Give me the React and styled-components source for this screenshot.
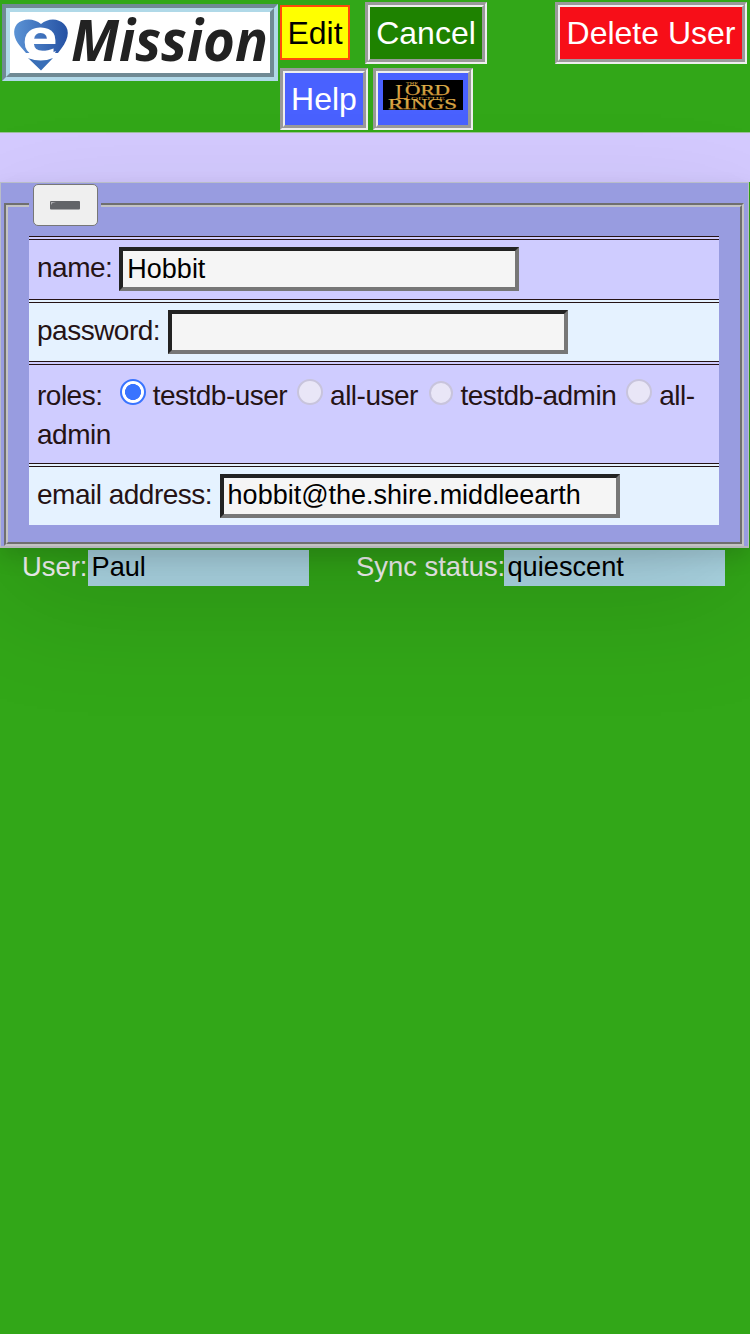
import React from "react";
import styled, { createGlobalStyle } from "styled-components";

const GlobalStyle = createGlobalStyle`
  * { box-sizing: border-box; }
  body { margin: 0; background: #32a718; font-family: "Liberation Sans", Arial, sans-serif; }
`;

const Page = styled.main`
  width: 750px;
  height: 1334px;
  overflow: hidden;
  background: #32a718;
`;

const Header = styled.header`
  display: flex;
  align-items: flex-start;
  height: 132px;
  padding: 2px 3px 0 2px;
`;

const LogoFrame = styled.div`
  width: 276px;
  height: 77px;
  margin: 2px 2px 0 0;
  border: 8px groove #b0d9e8;
  background: #fff;
  svg { display: block; width: 260px; height: 61px; overflow: visible; }
`;

const Actions = styled.div`
  flex: 1;
`;

const ActionRow = styled.div`
  display: flex;
  align-items: flex-start;
  height: 66px;
  gap: ${(p) => p.$gap}px;
`;

const Button = styled.button`
  width: ${(p) => p.$width}px;
  height: 62px;
  padding: 0;
  border: 5px groove #eee;
  background: ${(p) => p.$bg};
  color: #fff;
  font: 32px/50px "Liberation Sans", Arial, sans-serif;
  white-space: nowrap;
  margin-left: ${(p) => (p.$end ? "auto" : 0)};
  svg { display: block; width: 80px; height: 30px; margin: -9px auto 0; overflow: visible; }
`;

const EditButton = styled(Button)`
  height: 55px;
  margin-top: 3px;
  border: 2px solid #ff4a0a;
  color: #000;
`;

const Band = styled.div`
  height: 50px;
  border-top: 1px solid #9bbf9b;
  background: #d4caff;
`;

const Panel = styled.section`
  position: relative;
  width: 749px;
  height: 366px;
  padding: 1px 4px 0 3px;
  border: 1px solid #b9bdc8;
  border-bottom: 2px solid #b5b5b9;
  background: #989ce0;
  box-shadow: 0 50px 120px rgba(0, 0, 0, 0.14), 0 9px 20px rgba(0, 0, 0, 0.12);
`;

const Fieldset = styled.fieldset`
  min-width: 0;
  height: 362px;
  margin: 0;
  padding: 10px 21px 0;
  border: 4px groove #c3c3c3;
`;

const Legend = styled.legend`
  margin: 0;
  padding: 0 3px 0 4px;
  height: 42px;
`;

const ToggleButton = styled.button`
  display: flex;
  align-items: center;
  justify-content: center;
  width: 65px;
  height: 42px;
  padding: 0 1px 0 0;
  border: 1.5px solid #777;
  border-radius: 5px;
  background: #efefef;
`;

const Row = styled.div`
  height: ${(p) => p.$height}px;
  padding: ${(p) => (p.$multi ? "11px" : "7px")} 8px 0;
  border-top: 4px double #251315;
  background: ${(p) => (p.$tint ? "#e5f2ff" : "#cfccff")};
  color: #251315;
  font-size: 28px;
  letter-spacing: -0.5px;
  line-height: ${(p) => (p.$multi ? 39 : 42)}px;
`;

const FieldLine = styled.label`
  display: flex;
  gap: ${(p) => p.$gap || 7}px;
  white-space: nowrap;
`;

const Input = styled.input`
  width: 400px;
  height: 44px;
  padding: 0 4px;
  border: 4px inset #777;
  border-radius: 0;
  outline: 0;
  background: #f5f5f5;
  color: #000;
  font: 27px "Liberation Sans", Arial, sans-serif;
`;

const Radio = styled.span`
  display: inline-block;
  width: ${(p) => p.$size || 26}px;
  height: ${(p) => p.$size || 26}px;
  margin: 0 ${(p) => p.$right || 6.7}px 0 ${(p) => p.$left || 10.2}px;
  border: 2px solid ${(p) => (p.$checked ? "#3974ff" : "#c8c4dc")};
  border-radius: 50%;
  background: ${(p) => (p.$checked ? "radial-gradient(circle, #3974ff 0 7.7px, #fff 8.3px)" : "#e9e6f7")};
`;

const StatusBar = styled.footer`
  display: flex;
  align-items: flex-start;
  padding: 2px 0 0 22px;
  color: #f6f6f6;
  font-size: 27.4px;
  line-height: 34px;
`;

const StatusItem = styled.div`
  display: flex;
  flex: none;
  margin-right: 47px;
`;

const StatusLabel = styled.span`
  width: ${(p) => p.$width}px;
  white-space: nowrap;
`;

const StatusValue = styled.span`
  width: 221px;
  height: 36px;
  padding-left: 3.5px;
  background: #add8e6;
  color: #000;
  font-size: 27.2px;
`;

const Logo = () => (
  <svg viewBox="0 0 260 61" aria-label="eMission">
    <defs>
      <linearGradient id="heart" x1="0" x2="1">
        <stop offset="0" stopColor="#5b93d5" />
        <stop offset="1" stopColor="#2551a3" />
      </linearGradient>
    </defs>
    <path d="M31 12C24 6 13 6 7 12C2 18 4 27 10 34L16 41L48 41C58 29 61 19 54 12C48 6 38 6 31 12Z" fill="url(#heart)" />
    <path d="M18 46Q31 51 43 46L31 58.5Z" fill="#386eb7" />
    <text x="12" y="43.5" fontFamily="Open Sans" fontSize="52" fontWeight="700" fill="#fff" textLength="36" lengthAdjust="spacingAndGlyphs">e</text>
    <path d="M16 41Q29 47 46 39L43 45Q31 49 18 46Z" fill="#fff" />
    <text x="61" y="49" fontFamily="Open Sans" fontSize="57.5" fontWeight="700" fontStyle="italic" fill="#222" textLength="197" lengthAdjust="spacingAndGlyphs">Mission</text>
  </svg>
);

const RingsLogo = () => (
  <svg viewBox="0 0 80 30" aria-label="The Lord of the Rings">
    <defs>
      <linearGradient id="gold" x2="0" y2="1">
        <stop stopColor="#e6bd54" />
        <stop offset="1" stopColor="#c8882e" />
      </linearGradient>
    </defs>
    <rect width="80" height="30" fill="#000" />
    <g fill="url(#gold)" fontFamily="Liberation Serif">
      <text x="23" y="6" fontSize="5.5" textLength="12" lengthAdjust="spacingAndGlyphs">THE</text>
      <text x="12" y="18.5" fontSize="20" textLength="14" lengthAdjust="spacingAndGlyphs">L</text>
      <text x="22" y="15" fontSize="14" textLength="45" lengthAdjust="spacingAndGlyphs" stroke="#dca747" strokeWidth=".25">ORD</text>
      <text x="28" y="19.5" fontSize="5" textLength="34" lengthAdjust="spacingAndGlyphs">OF THE</text>
      <text x="5" y="28.8" fontSize="14" textLength="69" lengthAdjust="spacingAndGlyphs" stroke="#dca747" strokeWidth=".25">RINGS</text>
    </g>
  </svg>
);

const MinusIcon = () => (
  <svg width="32" height="10" viewBox="0 0 32 10" aria-hidden="true">
    <rect x="1" y="1" width="30" height="8.5" rx="1" fill="#626468" />
    <path d="M2 5V2H7L3.5 3Z" fill="#b0b0b3" />
  </svg>
);

export default function App() {
  return (
    <Page>
      <GlobalStyle />
      <Header>
        <LogoFrame><Logo /></LogoFrame>
        <Actions>
          <ActionRow $gap={15}>
            <EditButton $width={70} $bg="#ffff00">Edit</EditButton>
            <Button $width={122} $bg="#1e8200">Cancel</Button>
            <Button $width={192} $bg="#f70e18" $end>Delete User</Button>
          </ActionRow>
          <ActionRow $gap={5}>
            <Button $width={88} $bg="#4961ff">Help</Button>
            <Button $width={100} $bg="#4961ff"><RingsLogo /></Button>
          </ActionRow>
        </Actions>
      </Header>
      <Band />
      <Panel>
        <Fieldset>
          <Legend><ToggleButton aria-label="Collapse"><MinusIcon /></ToggleButton></Legend>
          <Row $height={62.5}>
            <FieldLine>name: <Input defaultValue="Hobbit" /></FieldLine>
          </Row>
          <Row $height={62.5} $tint>
            <FieldLine $gap={7.5}>password: <Input type="password" /></FieldLine>
          </Row>
          <Row $height={101.5} $multi>
            <span>roles: </span><Radio $checked /><span>testdb-user</span><Radio /><span>all-user</span><Radio $size={24} $left={10.8} $right={7.7} /><span>testdb-admin</span><Radio /><span>all-admin</span>
          </Row>
          <Row $height={62.5} $tint>
            <FieldLine $gap={7.5}>email address: <Input defaultValue="hobbit@the.shire.middleearth" /></FieldLine>
          </Row>
        </Fieldset>
      </Panel>
      <StatusBar>
        <StatusItem><StatusLabel $width={66}>User:</StatusLabel><StatusValue>Paul</StatusValue></StatusItem>
        <StatusItem><StatusLabel $width={148}>Sync status:</StatusLabel><StatusValue>quiescent</StatusValue></StatusItem>
      </StatusBar>
    </Page>
  );
}
